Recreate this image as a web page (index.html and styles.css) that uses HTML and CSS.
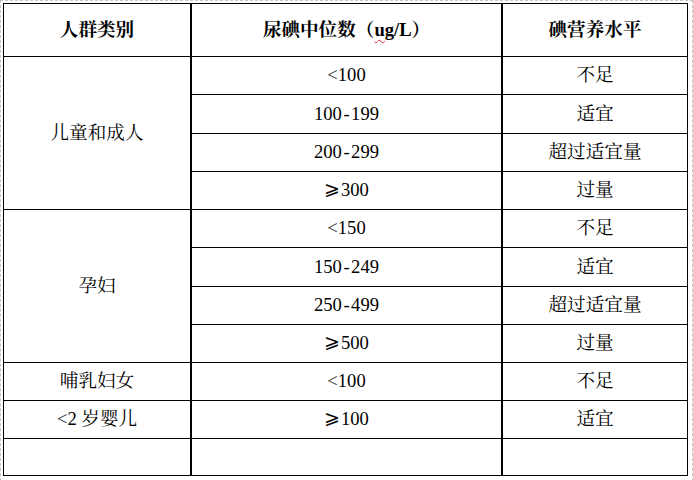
FILE: index.html
```html
<!DOCTYPE html>
<html lang="zh-CN">
<head>
<meta charset="utf-8">
<title>碘营养水平</title>
<link rel="stylesheet" href="styles.css">
</head>
<body>
<div class="frame">
  <div class="table">
    <div class="cell head">人群类别</div>
    <div class="cell head">尿碘中位数（<span class="spell">ug</span>/L）</div>
    <div class="cell head last">碘营养水平</div>

    <div class="cell span4">儿童和成人</div>
    <div class="cell"><span class="lt">&lt;</span>100</div>
    <div class="cell last">不足</div>
    <div class="cell">100<span class="dash">-</span>199</div>
    <div class="cell last">适宜</div>
    <div class="cell">200<span class="dash">-</span>299</div>
    <div class="cell last">超过适宜量</div>
    <div class="cell"><span class="ge">⩾</span>300</div>
    <div class="cell last">过量</div>

    <div class="cell span4">孕妇</div>
    <div class="cell"><span class="lt">&lt;</span>150</div>
    <div class="cell last">不足</div>
    <div class="cell">150<span class="dash">-</span>249</div>
    <div class="cell last">适宜</div>
    <div class="cell">250<span class="dash">-</span>499</div>
    <div class="cell last">超过适宜量</div>
    <div class="cell"><span class="ge">⩾</span>500</div>
    <div class="cell last">过量</div>

    <div class="cell">哺乳妇女</div>
    <div class="cell"><span class="lt">&lt;</span>100</div>
    <div class="cell last">不足</div>

    <div class="cell"><span class="lt">&lt;</span>2 岁婴儿</div>
    <div class="cell"><span class="ge">⩾</span>100</div>
    <div class="cell last">适宜</div>

    <div class="cell"></div>
    <div class="cell"></div>
    <div class="cell last"></div>
  </div>
</div>
</body>
</html>
```

FILE: styles.css
```css
html, body {
  margin: 0;
  padding: 0;
  background: #fff;
}

body {
  font-family: "Liberation Serif", "Noto Serif CJK SC", "Noto Sans CJK SC", serif;
  font-size: 18.6px;
  color: #000;
}

.frame {
  width: 687px;
  height: 475px;
  padding: 2px;
  border: 1px dashed #c4c4c4;
}

.table {
  display: grid;
  grid-template-columns: 188px 311px 184px;
  grid-template-rows: 53px 38px 39px 38px 38px 38px 39px 38px 38px 38px 38px 37px;
  border-top: 1px solid #000;
  border-left: 1px solid #000;
  border-right: 1px solid #000;
  width: 683px;
}

.cell {
  display: flex;
  align-items: center;
  justify-content: center;
  border-bottom: 1px solid #000;
  border-right: 2px solid #000;
  line-height: 1;
  white-space: nowrap;
}

.cell.last {
  border-right: none;
}

.head {
  font-weight: bold;
}

.span4 {
  grid-row: span 4;
}

.ge {
  font-family: "DejaVu Sans", "Noto Sans CJK SC", sans-serif;
  font-size: 19px;
  margin-right: 1px;
  margin-bottom: 4px;
}

.lt {
  font-weight: 300;
  color: #333;
}

.dash {
  padding: 0 1.5px;
}

.spell {
  text-decoration: underline wavy #e03030;
  text-decoration-thickness: 1px;
  text-underline-offset: 3px;
}
```
